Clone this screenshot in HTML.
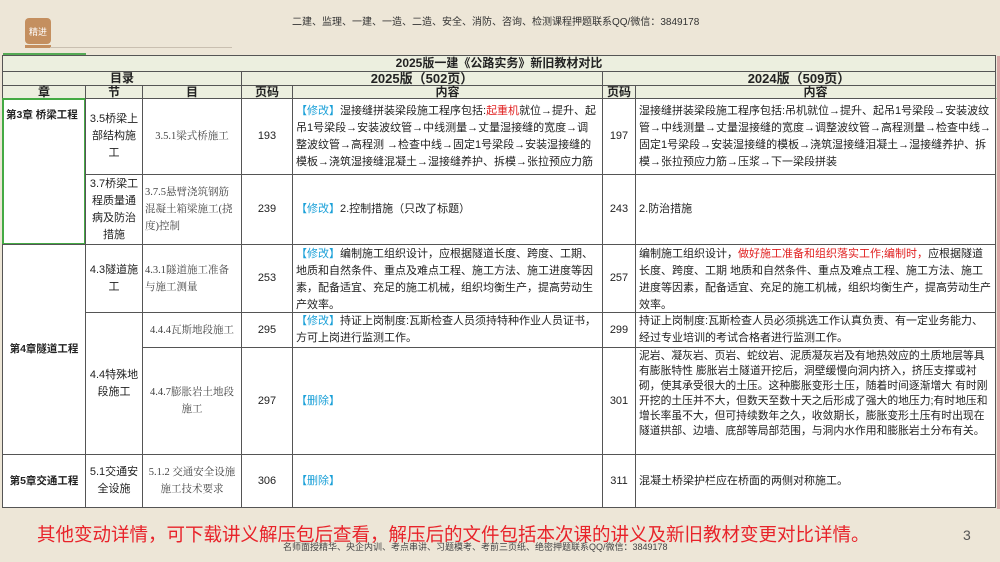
<!DOCTYPE html>
<html><head><meta charset="utf-8">
<style>
*{margin:0;padding:0;box-sizing:border-box}
body{width:1000px;height:562px;overflow:hidden;background:#ede6d7;position:relative;font-family:"Liberation Sans","Noto Sans CJK SC",sans-serif;color:#222}
.c{position:absolute;border:1px solid #555;background:#fff;font-size:11px;line-height:17px;display:flex;align-items:center;justify-content:center;text-align:center;padding:0 2px;margin:-1px 0 0 -1px}
.h{background:#ecefdf;font-weight:bold;font-size:12px;line-height:13px}
.t{justify-content:flex-start;align-items:flex-start;text-align:left;padding:4px 3px}
.b{color:#1aa0d8}
.r{color:#e02020}
.s{font-family:"Liberation Serif","Noto Serif CJK SC",serif;font-size:10.5px;color:#444}
</style></head><body>
<div style="position:absolute;left:25px;top:18px;width:26px;height:26px;background:#c48f5f;border-radius:4px;color:#fff;font-size:9px;display:flex;align-items:center;justify-content:center">精进</div>
<div style="position:absolute;left:25px;top:45px;width:26px;height:3px;background:#c48f5f"></div>
<div style="position:absolute;left:50px;top:47px;width:182px;height:1px;background:#c9bfb0"></div>
<div style="position:absolute;left:292px;top:13px;font-size:10px;color:#333">二建、监理、一建、一造、二造、安全、消防、咨询、检测课程押题联系QQ/微信：3849178</div>
<div style="position:absolute;left:3px;top:53px;width:83px;height:2px;background:#5a5"></div>

<div class="c h" style="left:3px;top:56px;width:994px;height:17px">2025版一建《公路实务》新旧教材对比</div>
<div class="c h" style="left:3px;top:72px;width:240px;height:15px">目录</div>
<div class="c h" style="left:242px;top:72px;width:362px;height:15px;font-size:13px">2025版（502页）</div>
<div class="c h" style="left:603px;top:72px;width:394px;height:15px;font-size:13px">2024版（509页）</div>
<div class="c h" style="left:3px;top:86px;width:84px;height:14px">章</div>
<div class="c h" style="left:86px;top:86px;width:58px;height:14px">节</div>
<div class="c h" style="left:143px;top:86px;width:100px;height:14px">目</div>
<div class="c h" style="left:242px;top:86px;width:52px;height:14px">页码</div>
<div class="c h" style="left:293px;top:86px;width:311px;height:14px">内容</div>
<div class="c h" style="left:603px;top:86px;width:34px;height:14px">页码</div>
<div class="c h" style="left:636px;top:86px;width:361px;height:14px">内容</div>
<div style="position:absolute;left:3px;top:98px;width:994px;height:1px;background:#8c8"></div>

<div class="c t" style="left:3px;top:99px;width:84px;height:147px;border:2px solid #4a4;font-weight:bold;font-size:10.5px;padding:7px 2px;white-space:nowrap">第3章 桥梁工程</div>
<div class="c" style="left:86px;top:99px;width:58px;height:77px">3.5桥梁上部结构施工</div>
<div class="c s" style="left:143px;top:99px;width:100px;height:77px">3.5.1梁式桥施工</div>
<div class="c" style="left:242px;top:99px;width:52px;height:77px">193</div>
<div class="c t" style="left:293px;top:99px;width:311px;height:77px"><span><span class="b">【修改】</span>湿接缝拼装梁段施工程序包括:<span class="r">起重机</span>就位→提升、起吊1号梁段→安装波纹管→中线测量→丈量湿接缝的宽度→调整波纹管→高程测 →检查中线→固定1号梁段→安装湿接缝的模板→浇筑湿接缝混凝土→湿接缝养护、拆模→张拉预应力筋</span></div>
<div class="c" style="left:603px;top:99px;width:34px;height:77px">197</div>
<div class="c t" style="left:636px;top:99px;width:361px;height:77px">湿接缝拼装梁段施工程序包括:吊机就位→提升、起吊1号梁段→安装波纹管→中线测量→丈量湿接缝的宽度→调整波纹管→高程测量→检查中线→固定1号梁段→安装湿接缝的模板→浇筑湿接缝泪凝土→湿接缝养护、拆模→张拉预应力筋→压浆→下一梁段拼装</div>

<div class="c" style="left:86px;top:175px;width:58px;height:71px">3.7桥梁工程质量通病及防治措施</div>
<div class="c s" style="left:143px;top:175px;width:100px;height:71px;text-align:left;justify-content:flex-start">3.7.5悬臂浇筑钢筋混凝土箱梁施工(挠度)控制</div>
<div class="c" style="left:242px;top:175px;width:52px;height:71px">239</div>
<div class="c t" style="left:293px;top:175px;width:311px;height:71px;align-items:center"><span><span class="b">【修改】</span>2.控制措施（只改了标题）</span></div>
<div class="c" style="left:603px;top:175px;width:34px;height:71px">243</div>
<div class="c t" style="left:636px;top:175px;width:361px;height:71px;align-items:center">2.防治措施</div>

<div class="c" style="left:3px;top:245px;width:84px;height:211px;font-weight:bold;font-size:10.5px;white-space:nowrap">第4章隧道工程</div>
<div class="c" style="left:86px;top:245px;width:58px;height:69px">4.3隧道施工</div>
<div class="c s" style="left:143px;top:245px;width:100px;height:69px;text-align:left;justify-content:flex-start">4.3.1隧道施工准备与施工测量</div>
<div class="c" style="left:242px;top:245px;width:52px;height:69px">253</div>
<div class="c t" style="left:293px;top:245px;width:311px;height:69px;padding-top:1px"><span><span class="b">【修改】</span>编制施工组织设计，应根据隧道长度、跨度、工期、地质和自然条件、重点及难点工程、施工方法、施工进度等因素，配备适宜、充足的施工机械，组织均衡生产，提高劳动生产效率。</span></div>
<div class="c" style="left:603px;top:245px;width:34px;height:69px">257</div>
<div class="c t" style="left:636px;top:245px;width:361px;height:69px;padding-top:1px"><span>编制施工组织设计，<span class="r">做好施工准备和组织落实工作;编制时，</span>应根据隧道长度、跨度、工期 地质和自然条件、重点及难点工程、施工方法、施工进度等因素，配备适宜、充足的施工机械，组织均衡生产，提高劳动生产效率。</span></div>

<div class="c" style="left:86px;top:313px;width:58px;height:143px">4.4特殊地段施工</div>
<div class="c s" style="left:143px;top:313px;width:100px;height:36px">4.4.4瓦斯地段施工</div>
<div class="c" style="left:242px;top:313px;width:52px;height:36px">295</div>
<div class="c t" style="left:293px;top:313px;width:311px;height:36px;padding-top:0"><span><span class="b">【修改】</span>持证上岗制度:瓦斯检查人员须持特种作业人员证书，方可上岗进行监测工作。</span></div>
<div class="c" style="left:603px;top:313px;width:34px;height:36px">299</div>
<div class="c t" style="left:636px;top:313px;width:361px;height:36px;padding-top:0">持证上岗制度:瓦斯检查人员必须挑选工作认真负责、有一定业务能力、经过专业培训的考试合格者进行监测工作。</div>

<div class="c s" style="left:143px;top:348px;width:100px;height:108px">4.4.7膨胀岩土地段施工</div>
<div class="c" style="left:242px;top:348px;width:52px;height:108px">297</div>
<div class="c t" style="left:293px;top:348px;width:311px;height:108px;align-items:center"><span class="b">【删除】</span></div>
<div class="c" style="left:603px;top:348px;width:34px;height:108px">301</div>
<div class="c t" style="left:636px;top:348px;width:361px;height:108px;padding-top:1px;line-height:15px;font-size:10.8px">泥岩、凝灰岩、页岩、蛇纹岩、泥质凝灰岩及有地热效应的土质地层等具有膨胀特性 膨胀岩土隧道开挖后，洞壁缓慢向洞内挤入，挤压支撑或衬砌，使其承受很大的土压。这种膨胀变形土压，随着时间逐渐增大 有时刚开挖的土压并不大，但数天至数十天之后形成了强大的地压力;有时地压和增长率虽不大，但可持续数年之久，收敛期长，膨胀变形土压有时出现在隧道拱部、边墙、底部等局部范围，与洞内水作用和膨胀岩土分布有关。</div>

<div class="c" style="left:3px;top:455px;width:84px;height:54px;font-weight:bold;font-size:10.5px;white-space:nowrap">第5章交通工程</div>
<div class="c" style="left:86px;top:455px;width:58px;height:54px">5.1交通安全设施</div>
<div class="c s" style="left:143px;top:455px;width:100px;height:54px">5.1.2 交通安全设施施工技术要求</div>
<div class="c" style="left:242px;top:455px;width:52px;height:54px">306</div>
<div class="c t" style="left:293px;top:455px;width:311px;height:54px;align-items:center"><span class="b">【删除】</span></div>
<div class="c" style="left:603px;top:455px;width:34px;height:54px">311</div>
<div class="c t" style="left:636px;top:455px;width:361px;height:54px;align-items:center">混凝土桥梁护栏应在桥面的两侧对称施工。</div>
<div style="position:absolute;left:997px;top:56px;width:3px;height:453px;background:#d9a6a6"></div>

<div style="position:absolute;left:283px;top:540px;font-size:9px;color:#444">名师面授精华、央企内训、考点串讲、习题模考、考前三页纸、绝密押题联系QQ/微信：3849178</div>
<div style="position:absolute;left:37px;top:521px;font-size:18.5px;color:#e8232a;white-space:nowrap">其他变动详情，可下载讲义解压包后查看，解压后的文件包括本次课的讲义及新旧教材变更对比详情。</div>
<div style="position:absolute;left:963px;top:527px;font-size:14px;color:#555">3</div>
</body></html>
